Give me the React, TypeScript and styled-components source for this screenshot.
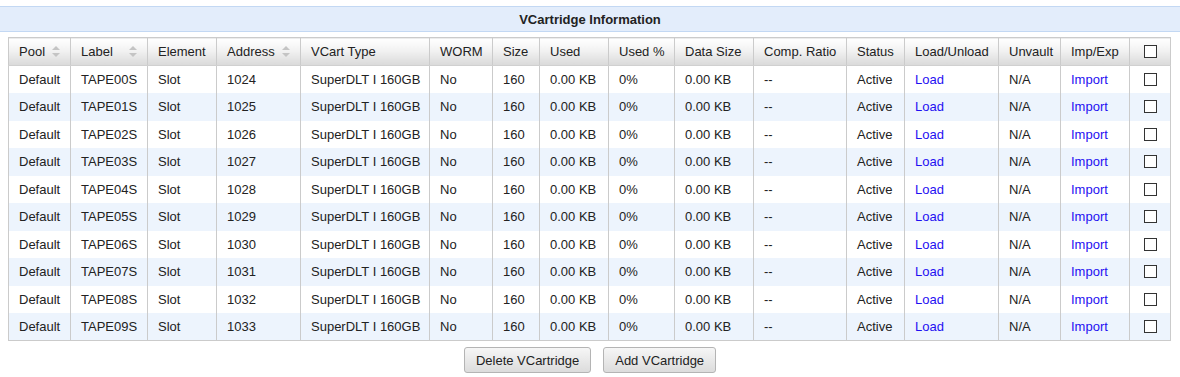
import styled, { createGlobalStyle } from "styled-components";

const GlobalStyle = createGlobalStyle`
  html, body {
    margin: 0;
    padding: 0;
    background: #fff;
    font-family: "Liberation Sans", Arial, sans-serif;
    font-size: 13px;
    color: #222;
  }
`;

const Page = styled.div`
  padding-top: 6px;
`;

const TitleBar = styled.div`
  height: 24px;
  background-color: #e3edfb;
  border-top: 1px solid #c3d8f3;
  border-bottom: 1px solid #c3d8f3;
  display: flex;
  align-items: center;
  justify-content: center;
  font-weight: bold;
  color: #222;
`;

const TableWrap = styled.div`
  margin: 5px 8px 0 8px;
`;

const Table = styled.table`
  width: 1162px;
  table-layout: fixed;
  border-collapse: collapse;
  border: 1px solid #cbcbcb;
`;

const HeadCell = styled.th`
  height: 27px;
  padding: 0 0 0 10px;
  text-align: left;
  font-weight: normal;
  color: #222;
  white-space: nowrap;
  background: linear-gradient(to bottom, #ffffff 0%, #f2f2f2 45%, #d9d9d9 100%);
  border-right: 1px solid #cbcbcb;
  border-bottom: 1px solid #d0d0d0;
`;

const HeadInner = styled.span`
  display: flex;
  align-items: center;
  justify-content: space-between;
  padding-right: 10px;
`;

const CenterCell = styled.span`
  display: flex;
  justify-content: center;
  margin-left: -10px;
`;

const Row = styled.tr<{ $alt: boolean }>`
  height: 27.5px;
  background-color: ${({ $alt }) => ($alt ? "#edf4fd" : "#ffffff")};
`;

const Cell = styled.td`
  padding: 0 0 0 10px;
  white-space: nowrap;
  overflow: hidden;
  border-right: 1px solid #cbcbcb;
  color: #222;
`;

const Link = styled.a`
  color: #1f10f2;
  text-decoration: none;
  cursor: pointer;
`;

const Box = styled.span`
  display: inline-block;
  width: 11px;
  height: 11px;
  border: 1px solid #333;
  background: #fff;
`;

const Buttons = styled.div`
  display: flex;
  justify-content: center;
  gap: 12px;
  margin-top: 6px;
`;

const Button = styled.button`
  height: 26px;
  padding: 0 11px;
  font-family: "Liberation Sans", Arial, sans-serif;
  font-size: 13px;
  color: #222;
  border: 1px solid #b4b4b4;
  border-radius: 3px;
  background: linear-gradient(to bottom, #f6f6f6 0%, #e9e9e9 50%, #dcdcdc 100%);
  cursor: pointer;
`;

const SortIcon = () => (
  <svg width="8" height="11" viewBox="0 0 8 11">
    <path d="M4 0 L8 4 L0 4 Z" fill="#c4c4c4" />
    <path d="M0 7 L8 7 L4 11 Z" fill="#c4c4c4" />
  </svg>
);

const columns = [
  { label: "Pool", width: 62, sort: true },
  { label: "Label", width: 77, sort: true },
  { label: "Element", width: 69 },
  { label: "Address", width: 84, sort: true },
  { label: "VCart Type", width: 129 },
  { label: "WORM", width: 63 },
  { label: "Size", width: 47 },
  { label: "Used", width: 69 },
  { label: "Used %", width: 66 },
  { label: "Data Size", width: 79 },
  { label: "Comp. Ratio", width: 93 },
  { label: "Status", width: 58 },
  { label: "Load/Unload", width: 94 },
  { label: "Unvault", width: 62 },
  { label: "Imp/Exp", width: 69 },
  { label: "", width: 41, check: true },
];

const rows = Array.from({ length: 10 }, (_, i) => ({
  pool: "Default",
  label: `TAPE0${i}S`,
  element: "Slot",
  address: String(1024 + i),
  type: "SuperDLT I 160GB",
  worm: "No",
  size: "160",
  used: "0.00 KB",
  usedPct: "0%",
  dataSize: "0.00 KB",
  ratio: "--",
  status: "Active",
  unvault: "N/A",
}));

const App = () => {
  return (
    <Page>
      <GlobalStyle />
      <TitleBar>VCartridge Information</TitleBar>
      <TableWrap>
        <Table>
          <colgroup>
            {columns.map((c, i) => (
              <col key={i} style={{ width: c.width }} />
            ))}
          </colgroup>
          <thead>
            <tr>
              {columns.map((c, i) => (
                <HeadCell key={i}>
                  {c.check ? (
                    <CenterCell>
                      <Box />
                    </CenterCell>
                  ) : (
                    <HeadInner>
                      {c.label}
                      {c.sort && <SortIcon />}
                    </HeadInner>
                  )}
                </HeadCell>
              ))}
            </tr>
          </thead>
          <tbody>
            {rows.map((r, i) => (
              <Row key={r.label} $alt={i % 2 === 1}>
                <Cell>{r.pool}</Cell>
                <Cell>{r.label}</Cell>
                <Cell>{r.element}</Cell>
                <Cell>{r.address}</Cell>
                <Cell>{r.type}</Cell>
                <Cell>{r.worm}</Cell>
                <Cell>{r.size}</Cell>
                <Cell>{r.used}</Cell>
                <Cell>{r.usedPct}</Cell>
                <Cell>{r.dataSize}</Cell>
                <Cell>{r.ratio}</Cell>
                <Cell>{r.status}</Cell>
                <Cell>
                  <Link>Load</Link>
                </Cell>
                <Cell>{r.unvault}</Cell>
                <Cell>
                  <Link>Import</Link>
                </Cell>
                <Cell>
                  <CenterCell>
                    <Box />
                  </CenterCell>
                </Cell>
              </Row>
            ))}
          </tbody>
        </Table>
      </TableWrap>
      <Buttons>
        <Button>Delete VCartridge</Button>
        <Button>Add VCartridge</Button>
      </Buttons>
    </Page>
  );
};

export default App;
